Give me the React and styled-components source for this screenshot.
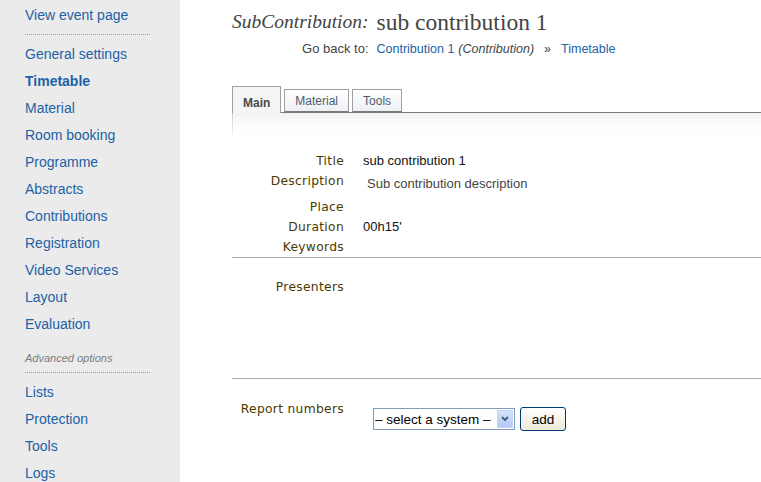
import React from 'react';
import styled, { createGlobalStyle } from 'styled-components';

const GlobalStyle = createGlobalStyle`
  html, body { margin: 0; padding: 0; background: #fff; }
  body { font-family: "Liberation Sans", Arial, sans-serif; overflow: hidden; }
`;

const Page = styled.div({
  display: 'flex',
  minHeight: '100vh',
  width: '761px',
  overflow: 'hidden'
});

const Sidebar = styled.nav({
  width: '180px',
  flexShrink: 0,
  background: '#ebebeb',
  paddingTop: '2px',
  boxSizing: 'border-box'
});

const NavItem = styled.a(props => ({
  display: 'block',
  height: '27px',
  lineHeight: '27px',
  paddingLeft: '25px',
  fontSize: '14px',
  color: '#1b62a6',
  textDecoration: 'none',
  fontWeight: props.$active ? 'bold' : 'normal',
  whiteSpace: 'nowrap'
}));

const Dots = styled.div(props => ({
  marginLeft: '25px',
  width: '125px',
  borderTop: '1px dotted #9a9a9a',
  marginTop: props.$top || '5px',
  marginBottom: '6px'
}));

const SectionLabel = styled.div({
  marginTop: '7px',
  height: '27px',
  lineHeight: '27px',
  paddingLeft: '25px',
  fontSize: '11px',
  fontStyle: 'italic',
  color: '#7c7c7c'
});

const Main = styled.main({
  flex: 1,
  paddingLeft: '52px',
  paddingTop: '7px'
});

const Header = styled.div({
  display: 'grid',
  gridTemplateColumns: 'auto auto',
  justifyContent: 'start',
  columnGap: '8px',
  rowGap: '3px',
  alignItems: 'center'
});

const Kind = styled.div({
  fontFamily: '"Liberation Serif", "Times New Roman", serif',
  fontStyle: 'italic',
  fontSize: '19.5px',
  color: '#444',
  lineHeight: '30px',
  textAlign: 'right'
});

const Heading = styled.h1({
  margin: 0,
  fontFamily: '"Liberation Serif", "Times New Roman", serif',
  fontWeight: 'normal',
  fontSize: '23.5px',
  color: '#444',
  lineHeight: '30px'
});

const BackLabel = styled.div({
  fontSize: '13px',
  color: '#444',
  lineHeight: '18px',
  textAlign: 'right'
});

const BackLinks = styled.div({
  fontSize: '12.5px',
  lineHeight: '18px',
  color: '#444',
  whiteSpace: 'nowrap'
});

const Link = styled.a({
  color: '#1b62a6',
  textDecoration: 'none'
});

const Muted = styled.span({
  fontStyle: 'italic',
  color: '#444',
  marginLeft: '4px'
});

const Sep = styled.span({
  margin: '0 10px',
  color: '#444'
});

const TabBar = styled.div({
  marginTop: '28px',
  display: 'flex',
  alignItems: 'flex-end',
  gap: '3px',
  borderBottom: '1px solid #7a7a7a',
  height: '26px'
});

const Tab = styled.div(props => ({
  boxSizing: 'border-box',
  height: props.$active ? '27px' : '23px',
  marginBottom: props.$active ? '-1px' : '0',
  padding: '0 10px',
  lineHeight: props.$active ? '32px' : '22px',
  fontSize: '12px',
  fontWeight: props.$active ? 'bold' : 'normal',
  color: props.$active ? '#4a4a4a' : '#4d5b70',
  border: '1px solid #a0a0a0',
  borderBottom: props.$active ? 'none' : '1px solid #7a7a7a',
  background: props.$active ? '#f5f5f5' : 'linear-gradient(#ffffff, #eef0f4)',
  cursor: 'pointer'
}));

const TabBody = styled.div({
  height: '22px',
  borderLeft: '1px solid #c8c8c8',
  background: 'linear-gradient(#f2f2f2, #ffffff)',
  maskImage: 'linear-gradient(#000, rgba(0,0,0,0.2))'
});

const Section = styled.div(props => ({
  display: 'grid',
  gridTemplateColumns: '112px 1fr',
  columnGap: '19px',
  alignContent: 'start',
  boxSizing: 'border-box',
  padding: props.$pad || '0',
  height: props.$height || 'auto',
  borderBottom: props.$line ? '1px solid #aaa' : 'none'
}));

const Label = styled.div(props => ({
  fontFamily: '"DejaVu Sans", Verdana, sans-serif',
  fontSize: '12.3px',
  letterSpacing: '0.3px',
  color: '#4b3a00',
  textAlign: 'right',
  lineHeight: props.$lh || '20px',
  whiteSpace: 'nowrap'
}));

const Value = styled.div(props => ({
  fontSize: '13px',
  color: props.$muted ? '#444' : '#111',
  lineHeight: '20px',
  padding: props.$pad || '0'
}));

const Controls = styled.div({
  display: 'flex',
  alignItems: 'center',
  gap: '5px',
  paddingLeft: '10px',
  paddingTop: '8px'
});

const SelectBox = styled.div({
  display: 'flex',
  alignItems: 'stretch',
  width: '142px',
  height: '22px',
  boxSizing: 'border-box',
  border: '1px solid #7f9db9',
  background: '#fff'
});

const Select = styled.select({
  appearance: 'none',
  border: 'none',
  outline: 'none',
  background: 'transparent',
  flex: 1,
  minWidth: 0,
  padding: '0 1px',
  fontFamily: '"Liberation Sans", Arial, sans-serif',
  fontSize: '13.5px',
  color: '#000'
});

const Arrow = styled.span({
  width: '16px',
  margin: '1px',
  background: 'linear-gradient(#d6e2fc, #b3c8f5)',
  border: '1px solid #c3d3fd',
  boxSizing: 'border-box',
  display: 'flex',
  alignItems: 'center',
  justifyContent: 'center'
});

const Button = styled.button({
  height: '24px',
  width: '46px',
  border: '1px solid #003c74',
  borderRadius: '3px',
  background: 'linear-gradient(#ffffff, #ece9d8)',
  fontFamily: '"Liberation Sans", Arial, sans-serif',
  fontSize: '13.5px',
  color: '#000',
  padding: 0
});

const navTop = ['General settings', 'Timetable', 'Material', 'Room booking', 'Programme', 'Abstracts', 'Contributions', 'Registration', 'Video Services', 'Layout', 'Evaluation'];
const navBottom = ['Lists', 'Protection', 'Tools', 'Logs'];

export default function App() {
  return (
    <Page>
      <GlobalStyle />
      <Sidebar>
        <NavItem href="#">View event page</NavItem>
        <Dots />
        {navTop.map(n => (
          <NavItem key={n} href="#" $active={n === 'Timetable'}>{n}</NavItem>
        ))}
        <SectionLabel>Advanced options</SectionLabel>
        <Dots $top="0" />
        {navBottom.map(n => (
          <NavItem key={n} href="#">{n}</NavItem>
        ))}
      </Sidebar>
      <Main>
        <Header>
          <Kind>SubContribution:</Kind>
          <Heading>sub contribution 1</Heading>
          <BackLabel>Go back to:</BackLabel>
          <BackLinks>
            <Link href="#">Contribution 1</Link>
            <Muted>(Contribution)</Muted>
            <Sep>»</Sep>
            <Link href="#">Timetable</Link>
          </BackLinks>
        </Header>
        <TabBar>
          <Tab $active>Main</Tab>
          <Tab>Material</Tab>
          <Tab>Tools</Tab>
        </TabBar>
        <TabBody />
        <Section $pad="16px 0 0 0" $line>
          <Label>Title</Label>
          <Value>sub contribution 1</Value>
          <Label>Description</Label>
          <Value $muted $pad="3px 0 3px 4px">Sub contribution description</Value>
          <Label>Place</Label>
          <Value />
          <Label>Duration</Label>
          <Value>00h15'</Value>
          <Label>Keywords</Label>
          <Value />
        </Section>
        <Section $pad="19px 0 0 0" $height="121px" $line>
          <Label>Presenters</Label>
          <Value />
        </Section>
        <Section $pad="20px 0 0 0">
          <Label>Report numbers</Label>
          <Controls>
            <SelectBox>
              <Select defaultValue="">
                <option value="">– select a system –</option>
              </Select>
              <Arrow>
                <svg width="8" height="6" viewBox="0 0 8 6">
                  <path d="M1 1 L4 4 L7 1" stroke="#4d6185" strokeWidth="2" fill="none" />
                </svg>
              </Arrow>
            </SelectBox>
            <Button>add</Button>
          </Controls>
        </Section>
      </Main>
    </Page>
  );
}
